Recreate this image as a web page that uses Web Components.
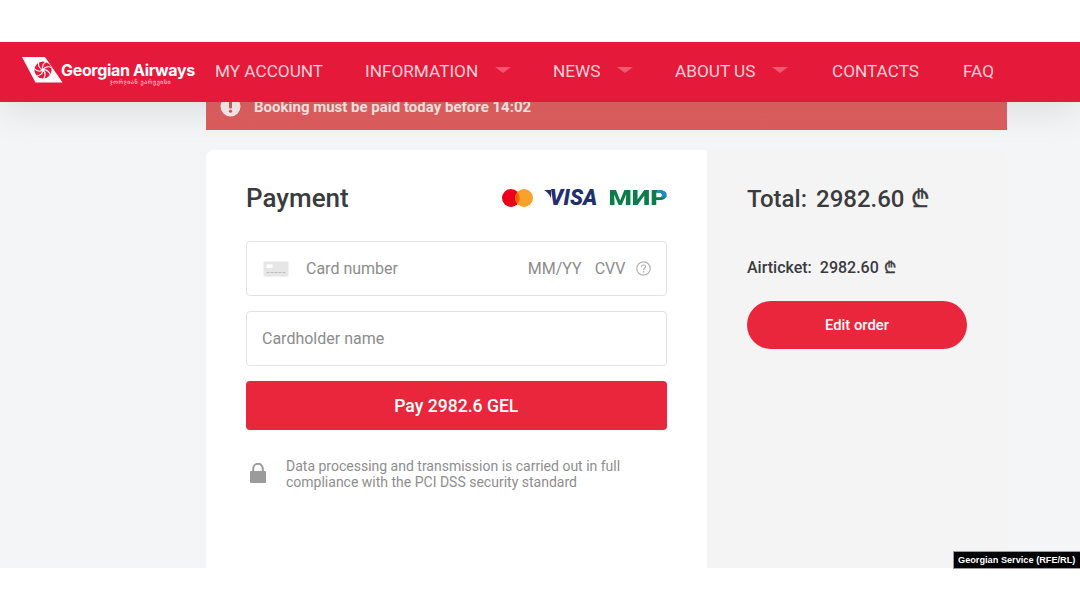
<!DOCTYPE html>
<html>
<head>
<meta charset="utf-8">
<title>Georgian Airways payment</title>
<style>
  html, body { margin: 0; padding: 0; background: #fff; }
  body { width: 1080px; height: 608px; overflow: hidden; font-family: Roboto, "Liberation Sans", sans-serif; }
</style>
</head>
<body>
<ga-page>
  <ga-header slot="header"></ga-header>
  <ga-notice slot="notice">Booking must be paid today before 14:02</ga-notice>
  <ga-payment slot="main"></ga-payment>
  <ga-summary slot="side"></ga-summary>
</ga-page>

<script>
class GaPage extends HTMLElement {
  constructor() {
    super();
    this.attachShadow({ mode: 'open' }).innerHTML = /*html*/`
      <style>
        :host { display: block; position: relative; height: 608px; box-sizing: border-box; padding-top: 42px; }
        .view {
          height: 526px;
          overflow: hidden;
          background: #f4f5f6;
          display: flex;
          flex-direction: column;
        }
        .col { width: 801px; margin-left: 206px; display: flex; flex-direction: column; flex: 1; min-height: 0; }
        .cols { display: flex; margin-top: 20px; background: #f4f4f5; border-radius: 8px; flex: 1; min-height: 0; }
        .caption {
          position: absolute; left: 953px; top: 551px; width: 127px; height: 18px;
          background: #000; color: #fff; box-sizing: border-box;
          border: 1px solid #9a9a9a; border-right: 0;
          font: bold 9.2px/16px "Liberation Sans", sans-serif;
          padding-left: 4px; white-space: nowrap;
        }
      </style>
      <div class="view">
        <slot name="header"></slot>
        <div class="col">
          <slot name="notice"></slot>
          <div class="cols">
            <slot name="main"></slot>
            <slot name="side"></slot>
          </div>
        </div>
      </div>
      <div class="caption">Georgian Service (RFE/RL)</div>
    `;
  }
}

class GaHeader extends HTMLElement {
  constructor() {
    super();
    // pinwheel: red disc cut by curved white slits
    const slits = [0, 51.4, 102.8, 154.2, 205.7, 257.1, 308.5].map(a =>
      `<path transform="rotate(${a} 21 13)" d="M21 13C22.5 10.5 25.5 9 29.4 10.4" fill="none" stroke="#fff" stroke-width="1.1"/>`
    ).join('');
    this.attachShadow({ mode: 'open' }).innerHTML = /*html*/`
      <style>
        :host {
          display: flex; align-items: center; position: relative; z-index: 2;
          flex: none; height: 60px; box-sizing: border-box; padding-left: 22px;
          background: #e5193a;
          box-shadow: 0 8px 38px rgba(0,0,0,.1);
        }
        .logo { position: relative; width: 193px; height: 30px; flex: none; }
        .logo svg { position: absolute; left: 0; top: 0; }
        .name {
          position: absolute; left: 39px; top: 5px; color: #fff; white-space: nowrap;
          font: 700 16px/16px Inter, Roboto, sans-serif; letter-spacing: -.33px;
        }
        .sub {
          position: absolute; left: 88px; top: 21px; color: #fde3e7; white-space: nowrap;
          font: 6px/7px "DejaVu Sans", sans-serif; letter-spacing: .55px;
        }
        nav { display: flex; align-items: center; margin-top: -2px; color: #fcd0d8; font: 400 17.2px/24px Roboto, sans-serif; }
        a { display: flex; align-items: center; white-space: nowrap; }
        i { display: block; width: 0; height: 0; margin: -2px 0 0 17px;
            border: 8px solid transparent; border-bottom: 0; border-top: 6px solid #ef5a72; }
      </style>
      <div class="logo">
        <svg width="41" height="26" viewBox="0 0 41 26">
          <path d="M0 0H23L40.5 25.5H13.5Z" fill="#fff"/>
          <circle cx="21" cy="13" r="8.6" fill="#e5193a"/>
          ${slits}
          <circle cx="21" cy="13" r="1.4" fill="#fff"/>
        </svg>
        <span class="name">Georgian Airways</span>
        <span class="sub" lang="ka">ჯორჯიან ეარვეისი</span>
      </div>
      <nav>
        <a style="width:150px">MY ACCOUNT</a>
        <a style="width:188px">INFORMATION<i></i></a>
        <a style="width:122px">NEWS<i></i></a>
        <a style="width:157px">ABOUT US<i></i></a>
        <a style="width:131px">CONTACTS</a>
        <a>FAQ</a>
      </nav>
    `;
  }
}

class GaNotice extends HTMLElement {
  constructor() {
    super();
    this.attachShadow({ mode: 'open' }).innerHTML = /*html*/`
      <style>
        :host {
          display: flex; align-items: center; flex: none; height: 46px; margin-top: -18px;
          box-sizing: border-box; padding: 0 0 0 14px;
          background: linear-gradient(#e46363 40%, #dc5c5c); color: #fbeaea;
          font: 700 15px/18px Roboto, sans-serif;
        }
        svg { margin-right: 13px; margin-top: -2px; flex: none; }
      </style>
      <svg width="21" height="21" viewBox="0 0 21 21">
        <circle cx="10.5" cy="10.5" r="10" fill="#fbeeee"/>
        <rect x="9" y="4.5" width="3" height="8" rx="1.2" fill="#d95b5b"/>
        <circle cx="10.5" cy="15.2" r="1.6" fill="#d95b5b"/>
      </svg>
      <span><slot></slot></span>
    `;
  }
}

class GaPayment extends HTMLElement {
  constructor() {
    super();
    this.attachShadow({ mode: 'open' }).innerHTML = /*html*/`
      <style>
        :host {
          display: flex; flex-direction: column; flex: none; width: 501px;
          box-sizing: border-box; padding: 30px 40.5px 0 40px;
          background: #fff; border-radius: 8px 0 0 0;
          color: #8a8a8a;
        }
        .top { display: flex; align-items: center; justify-content: space-between; height: 36px; margin-bottom: 25px; }
        h2 { margin: 0; color: #3a3b3d; font: 500 26px/36px Roboto, sans-serif; }
        .brands { display: flex; align-items: center; margin-right: -1.5px; }
        .visa { display: flex; align-items: center; margin: 0 0 0 11px; color: #222f6e; font: italic 900 21.5px/24px Roboto, sans-serif; letter-spacing: .1px; }
        .mir {
          display: block; margin-left: 24px; color: #0f7a4a; font: 900 21px/24px Roboto, sans-serif;
          transform: scaleX(1.27); transform-origin: right center;
        }
        .mir span {
          color: transparent;
          background: linear-gradient(#1b8cc8, #1b8cc8) right top / 60% 48% no-repeat, #0f7a4a;
          -webkit-background-clip: text; background-clip: text;
        }
        .field {
          display: flex; align-items: center; height: 55px; box-sizing: border-box;
          border: 1px solid #e3e3e3; border-radius: 4px; margin-bottom: 15px;
          padding: 0 15px 0 16px; font: 400 16px/20px Roboto, sans-serif; color: #8c8c8c;
        }
        .card { margin-right: 17px; flex: none; }
        .grow { flex: 1; }
        .cvv { margin: 0 10px 0 13px; }
        button {
          display: block; width: 100%; height: 49px; border: 0; border-radius: 4px;
          background: #ea263c; color: #fff; font: 500 17.6px/20px Roboto, sans-serif;
          padding: 0;
        }
        .note { display: flex; margin-top: 28px; font: 400 14px/16px Roboto, sans-serif; color: #8e8e8e; }
        .note svg { flex: none; margin: 5px 20px 0 4px; }
      </style>
      <div class="top">
        <h2>Payment</h2>
        <div class="brands">
          <svg width="31" height="18" viewBox="0 0 31 18">
            <circle cx="9" cy="9" r="9" fill="#eb001b"/>
            <circle cx="22" cy="9" r="9" fill="#f9a12b"/>
            <path d="M15.5 3.2a9 9 0 0 1 0 11.6a9 9 0 0 1 0-11.6Z" fill="#ff5f00"/>
          </svg>
          <span class="visa"><svg width="7" height="8" viewBox="0 0 7 8" style="margin:-8px -1px 0 0"><path d="M0 0H7V8C5 4 3 2 0 0Z" fill="#222f6e"/></svg>VISA</span>
          <span class="mir">МИ<span>Р</span></span>
        </div>
      </div>

      <div class="field">
        <svg class="card" width="26" height="16" viewBox="0 0 26 16">
          <rect x=".5" y=".5" width="25" height="15" rx="1.5" fill="#e6e6e6"/>
          <rect x="3.5" y="3.5" width="6" height="3.5" fill="#fff"/>
          <path d="M3.5 11.5H22.5" stroke="#bdbdbd" stroke-dasharray="3 1"/>
        </svg>
        <span class="grow">Card number</span>
        <span>MM/YY</span>
        <span class="cvv">CVV</span>
        <svg width="15" height="15" viewBox="0 0 15 15" fill="none">
          <circle cx="7.5" cy="7.5" r="6.7" stroke="#b4b4b4" stroke-width="1.2"/>
          <path d="M5.4 5.9C5.5 4.6 6.4 4 7.5 4C8.7 4 9.6 4.7 9.6 5.8C9.6 7.2 7.5 7.3 7.5 8.9" stroke="#b4b4b4" stroke-width="1.2"/>
          <circle cx="7.5" cy="10.9" r=".8" fill="#b4b4b4"/>
        </svg>
      </div>

      <div class="field" style="padding-left:15px">Cardholder name</div>

      <button>Pay 2982.6 GEL</button>

      <div class="note">
        <svg width="16" height="20" viewBox="0 0 16 20">
          <path d="M3.2 9V5.6A4.8 4.8 0 0 1 12.8 5.6V9" fill="none" stroke="#9b9b9b" stroke-width="2"/>
          <rect y="8" width="16" height="12" rx="1" fill="#9b9b9b"/>
        </svg>
        <span>Data processing and transmission is carried out in full<br>compliance with the PCI DSS security standard</span>
      </div>
    `;
  }
}

class GaSummary extends HTMLElement {
  constructor() {
    super();
    this.attachShadow({ mode: 'open' }).innerHTML = /*html*/`
      <style>
        :host {
          display: flex; flex-direction: column; box-sizing: border-box;
          width: 300px; padding: 31px 40px 0; color: #3a3b3d;
        }
        .total { display: flex; font: 500 24px/36px Roboto, sans-serif; white-space: nowrap; }
        .total b { font-weight: 500; margin-left: 9px; white-space: pre; }
        .line { display: flex; margin-top: 41px; font: 500 16px/20px Roboto, sans-serif; white-space: nowrap; }
        .line b { font-weight: 500; margin-left: 8px; white-space: pre; }
        .lari { font-family: "DejaVu Sans", sans-serif; font-weight: 400; margin-left: 1px; -webkit-text-stroke: .35px #3a3b3d; }
        button {
          display: block; margin-top: 23px; width: 220px; height: 48px; border: 0; padding: 0;
          border-radius: 24px; background: #ea263c; color: #fff;
          font: 500 14.8px/20px Roboto, sans-serif;
        }
      </style>
      <div class="total">Total: <b>2982.60 <span class="lari">₾</span></b></div>
      <div class="line">Airticket: <b>2982.60 <span class="lari">₾</span></b></div>
      <button>Edit order</button>
    `;
  }
}

customElements.define('ga-page', GaPage);
customElements.define('ga-header', GaHeader);
customElements.define('ga-notice', GaNotice);
customElements.define('ga-payment', GaPayment);
customElements.define('ga-summary', GaSummary);
</script>
</body>
</html>
